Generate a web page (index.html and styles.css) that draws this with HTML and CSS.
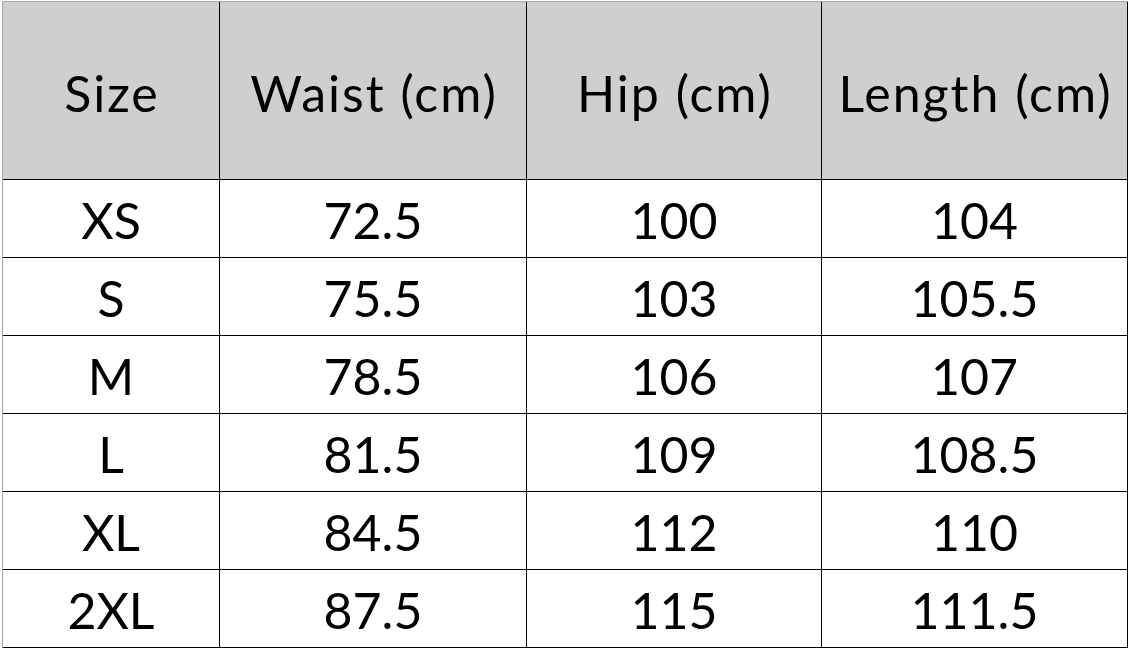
FILE: index.html
```html
<!DOCTYPE html>
<html>
<head>
<meta charset="utf-8">
<link rel="stylesheet" href="styles.css">
</head>
<body>
<div class="sheet">
<table class="size-table">
  <colgroup>
    <col class="c1"><col class="c2"><col class="c3"><col class="c4">
  </colgroup>
  <thead>
    <tr class="head-row"><th>Size</th><th>Waist (cm)</th><th>Hip (cm)</th><th>Length (cm)</th></tr>
  </thead>
  <tbody>
    <tr><td>XS</td><td>72.5</td><td>100</td><td>104</td></tr>
    <tr><td>S</td><td>75.5</td><td>103</td><td>105.5</td></tr>
    <tr><td>M</td><td>78.5</td><td>106</td><td>107</td></tr>
    <tr><td>L</td><td>81.5</td><td>109</td><td>108.5</td></tr>
    <tr><td>XL</td><td>84.5</td><td>112</td><td>110</td></tr>
    <tr><td>2XL</td><td>87.5</td><td>115</td><td>111.5</td></tr>
  </tbody>
</table>
</div>
</body>
</html>
```
FILE: styles.css
```css
html, body {
  margin: 0;
  padding: 0;
  background: #ffffff;
}
.sheet {
  padding: 1px 0 0 2px;
}
.size-table {
  border-collapse: separate;
  border-spacing: 0;
  table-layout: fixed;
  width: 1126px;
  border-top: 1px solid #a6a6a6;
  border-left: 1px solid #a6a6a6;
  font-family: "Lato", "Liberation Sans", sans-serif;
  font-size: 50px;
  color: #000;
}
.c1 { width: 217px; }
.c2 { width: 307px; }
.c3 { width: 295px; }
.c4 { width: 306px; }
.size-table th,
.size-table td {
  box-sizing: border-box;
  padding: 0;
  text-align: center;
  vertical-align: middle;
  font-weight: normal;
  border-right: 1px solid #000;
  border-bottom: 1px solid #000;
  line-height: 1;
}
.head-row th {
  height: 178px;
  background: #d0cece;
  letter-spacing: 2px;
  padding-left: 2px;
  padding-top: 4px;
}
.size-table td {
  height: 78px;
  padding-top: 2px;
}
```
